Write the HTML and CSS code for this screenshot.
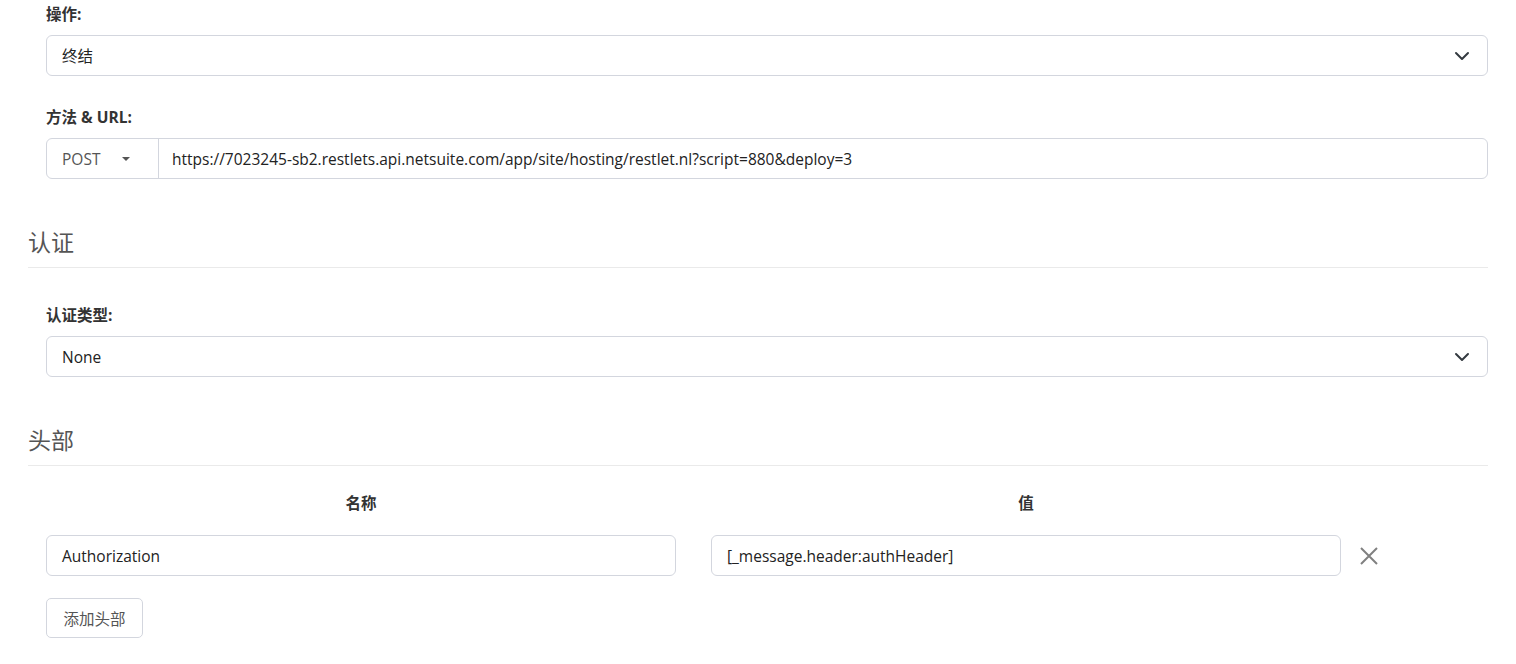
FILE: index.html
```html
<!DOCTYPE html>
<html lang="zh-CN">
<head>
  <meta charset="UTF-8">
  <title>HTTP 请求设置</title>
  <link rel="stylesheet" href="styles.css">
</head>
<body>
  <div class="page">
    <div class="form-body">
      <div class="form-group">
        <label class="form-label">操作:</label>
        <div class="select-box">
          <span>终结</span>
          <svg class="chevron" width="16" height="16" viewBox="0 0 16 16"><path d="M2 5l6 6 6-6" fill="none" stroke="#343a40" stroke-width="2" stroke-linecap="round" stroke-linejoin="round"/></svg>
        </div>
      </div>
      <div class="form-group">
        <label class="form-label">方法 &amp; URL:</label>
        <div class="input-group">
          <div class="method">
            <span>POST</span>
            <span class="caret"></span>
          </div>
          <div class="url">https://7023245-sb2.restlets.api.netsuite.com/app/site/hosting/restlet.nl?script=880&amp;deploy=3</div>
        </div>
      </div>
    </div>

    <h3 class="section-title">认证</h3>
    <div class="form-body">
      <div class="form-group">
        <label class="form-label">认证类型:</label>
        <div class="select-box">
          <span>None</span>
          <svg class="chevron" width="16" height="16" viewBox="0 0 16 16"><path d="M2 5l6 6 6-6" fill="none" stroke="#343a40" stroke-width="2" stroke-linecap="round" stroke-linejoin="round"/></svg>
        </div>
      </div>
    </div>

    <h3 class="section-title">头部</h3>
    <div class="form-body">
      <div class="header-row head">
        <div class="col">名称</div>
        <div class="col">值</div>
        <div class="col-remove"></div>
      </div>
      <div class="header-row">
        <div class="col"><div class="text-input">Authorization</div></div>
        <div class="col"><div class="text-input">[_message.header:authHeader]</div></div>
        <div class="col-remove">
          <svg class="remove" width="20" height="20" viewBox="0 0 20 20"><path d="M2 2l16 16M18 2L2 18" stroke="#808080" stroke-width="2"/></svg>
        </div>
      </div>
      <button class="btn">添加头部</button>
    </div>
  </div>
</body>
</html>
```

FILE: styles.css
```css
* {
  box-sizing: border-box;
  margin: 0;
  padding: 0;
}
body {
  font-family: "Segoe UI", "Open Sans", "Noto Sans CJK SC", sans-serif;
  font-size: 15.5px;
  color: #333;
  background: #fff;
}
.page {
  padding: 4px 28px 0 28px;
}
.form-body {
  padding-left: 18px;
}
.form-group {
  margin-bottom: 31px;
}
.form-label {
  display: block;
  font-weight: bold;
  line-height: 21px;
  margin-bottom: 10px;
  color: #333;
}
.select-box {
  display: flex;
  align-items: center;
  justify-content: space-between;
  height: 41px;
  padding: 0 17px 0 15px;
  border: 1px solid #d3d6de;
  border-radius: 6px;
  color: #222;
}
.input-group {
  display: flex;
  height: 41px;
  border: 1px solid #d3d6de;
  border-radius: 6px;
}
.method {
  display: flex;
  align-items: center;
  width: 112px;
  padding-left: 15px;
  border-right: 1px solid #d3d6de;
  color: #555;
}
.caret {
  margin-left: 22px;
  border-left: 4px solid transparent;
  border-right: 4px solid transparent;
  border-top: 4px solid #555;
}
.url {
  display: flex;
  align-items: center;
  padding-left: 13px;
  color: #222;
}
.section-title {
  font-size: 23px;
  font-weight: normal;
  color: #555;
  line-height: 31px;
  margin-top: 48px;
  padding-bottom: 9px;
  border-bottom: 1px solid #eaeaea;
  margin-bottom: 37px;
}
.header-row {
  display: flex;
  align-items: center;
}
.header-row .col {
  flex: 1;
}
.header-row .col + .col {
  margin-left: 35px;
}
.col-remove {
  width: 147px;
  padding-left: 18px;
}
.head {
  margin-top: -10px;
  margin-bottom: 21px;
  font-weight: bold;
  line-height: 21px;
  text-align: center;
}
.text-input {
  display: flex;
  align-items: center;
  height: 41px;
  padding-left: 15px;
  border: 1px solid #d3d6de;
  border-radius: 6px;
  color: #222;
}
.remove {
  display: block;
}
.btn {
  margin-top: 22px;
  height: 40px;
  width: 97px;
  font: inherit;
  color: #555;
  background: #fff;
  border: 1px solid #d3d6de;
  border-radius: 5px;
}
```
